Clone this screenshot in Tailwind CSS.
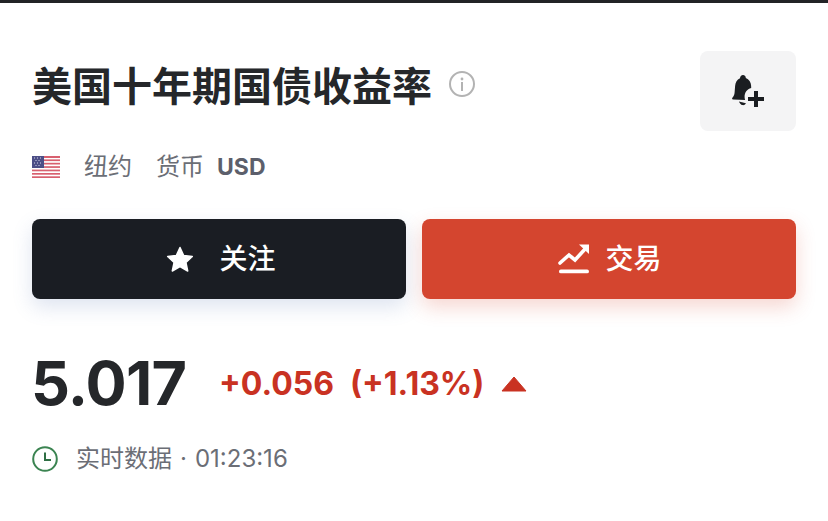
<!DOCTYPE html>
<html lang="en">
<head>
  <meta charset="UTF-8" />
  <title>美国十年期国债收益率</title>
  <script src="https://cdn.jsdelivr.net/npm/@tailwindcss/browser@4"></script>
</head>
<body class="bg-white font-['Inter','Noto_Sans_CJK_SC',sans-serif] overflow-hidden">
  <div class="w-[828px] h-[521px] border-t-[3px] border-[#222326] px-8 pt-12">

    <!-- title row -->
    <div class="flex justify-between items-start h-20">
      <div class="flex items-center gap-[17px] h-[72px]">
        <h1 class="text-[40px] leading-[72px] font-bold text-[#25272a]">美国十年期国债收益率</h1>
        <svg width="26" height="26" viewBox="0 0 26 26" fill="none" class="-mt-1.5">
          <circle cx="13" cy="13" r="12" stroke="#b3b3b3" stroke-width="2"/>
          <circle cx="13" cy="8" r="1.4" fill="#b3b3b3"/>
          <rect x="12" y="11" width="2" height="9" fill="#b3b3b3"/>
        </svg>
      </div>
      <button class="w-24 h-20 bg-[#f4f4f5] rounded-lg flex items-center justify-center">
        <svg width="34" height="34" viewBox="0 0 34 34">
          <path d="M12 1c1.700 0 2.900 1.400 2.800 3 3.200 1.500 5.200 4.200 5.300 7.500l.1 2.500c-4.200 1.200-6.800 4.800-6.600 9 0 1 .2 2 .5 3L2 25.500c-.9-.2-1.200-1.100-.6-1.800 1.500-1.700 2-3.100 2.200-5.200l.5-6.500C4.400 8.300 6 5.600 9 4.200 9.100 2.400 10.300 1 12 1z" fill="#1a1d21"/>
          <path d="M8 27.500l7 1.800c-.8 1.500-2.200 2.100-3.700 1.800-1.400-.3-2.700-1.900-3.300-3.600z" fill="#1a1d21"/>
          <rect x="17" y="23" width="16" height="4" fill="#1a1d21"/>
          <rect x="23" y="17" width="4" height="16" fill="#1a1d21"/>
        </svg>
      </button>
    </div>

    <!-- exchange and currency -->
    <div class="flex items-center h-9 mt-[18px] text-2xl text-[#6b6e76]">
      <svg width="28" height="22" viewBox="0 0 28 22" class="mr-6">
        <rect width="28" height="22" fill="#fff"/>
        <rect y="0" width="28" height="2" fill="#d8606f"/>
        <rect y="3.400" width="28" height="1.700" fill="#d8606f"/>
        <rect y="6.800" width="28" height="1.700" fill="#d8606f"/>
        <rect y="10.200" width="28" height="1.700" fill="#d8606f"/>
        <rect y="13.600" width="28" height="1.700" fill="#d8606f"/>
        <rect y="17" width="28" height="1.700" fill="#d8606f"/>
        <rect y="20.300" width="28" height="1.700" fill="#d8606f"/>
        <rect width="12" height="12" fill="#4d4f87"/>
        <path d="M2 2h1M5 2h1M8 2h1M3.500 4.500h1M6.500 4.500h1M2 7h1M5 7h1M8 7h1M3.500 9.500h1M6.500 9.500h1" stroke="#d5d6ea" stroke-width="1.200"/>
      </svg>
      <span>纽约</span>
      <span class="ml-6">货币</span>
      <span class="ml-[13px] text-[23px] font-bold text-[#5c5f6b]">USD</span>
    </div>

    <!-- actions -->
    <div class="grid grid-cols-2 gap-4 mt-[34px]">
      <button class="h-20 rounded-lg bg-[#1a1d23] text-white text-[28px] font-medium flex items-center justify-center gap-[25px] pl-1 shadow-[0_8px_20px_rgba(90,120,180,0.2)]">
        <svg width="28" height="27" viewBox="0 0 28 27"><path d="M14 1.500l3.700 8 8.600 1-6.400 5.900 1.800 8.600L14 20.700 6.300 25l1.800-8.600L1.700 10.500l8.600-1z" fill="#fff" stroke="#fff" stroke-width="1.500" stroke-linejoin="round"/></svg>
        <span>关注</span>
      </button>
      <button class="h-20 rounded-lg bg-[#d4452f] text-white text-[28px] font-medium flex items-center justify-center gap-[15px] pl-0.5 shadow-[0_8px_20px_rgba(212,69,47,0.22)]">
        <svg width="32" height="32" viewBox="0 0 32 32" fill="none">
          <path d="M2 20l9-8 6 5 11-12" stroke="#fff" stroke-width="3.600" stroke-linecap="round"/>
          <path d="M21 1.500h10v9.500z" fill="#fff"/>
          <rect x="1" y="26.500" width="30" height="3.800" rx="1.900" fill="#fff"/>
        </svg>
        <span>交易</span>
      </button>
    </div>

    <!-- quote -->
    <div class="flex items-center h-[70px] mt-[50px]">
      <span class="text-[61px] leading-none font-bold tracking-[-0.8px] -ml-px -mt-0.5 text-[#25272a]">5.017</span>
      <span class="ml-[33px] text-[32px] font-bold text-[#c93222]">+0.056</span>
      <span class="ml-4 text-[32px] font-bold text-[#c93222]">(+1.13%)</span>
      <svg width="26" height="16" viewBox="0 0 26 16" class="ml-[17px]"><path d="M13 1L25 15H1z" fill="#c93222" stroke="#c93222" stroke-linejoin="round"/></svg>
    </div>

    <!-- data status -->
    <div class="flex items-center h-9 mt-[22px] text-2xl text-[#6b6e76]">
      <svg width="26" height="26" viewBox="0 0 26 26" fill="none" class="mr-[18px]">
        <circle cx="13" cy="13" r="11.800" stroke="#3b8451" stroke-width="2"/>
        <path d="M13 6.500V14h6" stroke="#2f6f44" stroke-width="2"/>
      </svg>
      <span>实时数据</span>
      <span class="ml-2">·</span>
      <span class="ml-2">01:23:16</span>
    </div>
  </div>
</body>
</html>
